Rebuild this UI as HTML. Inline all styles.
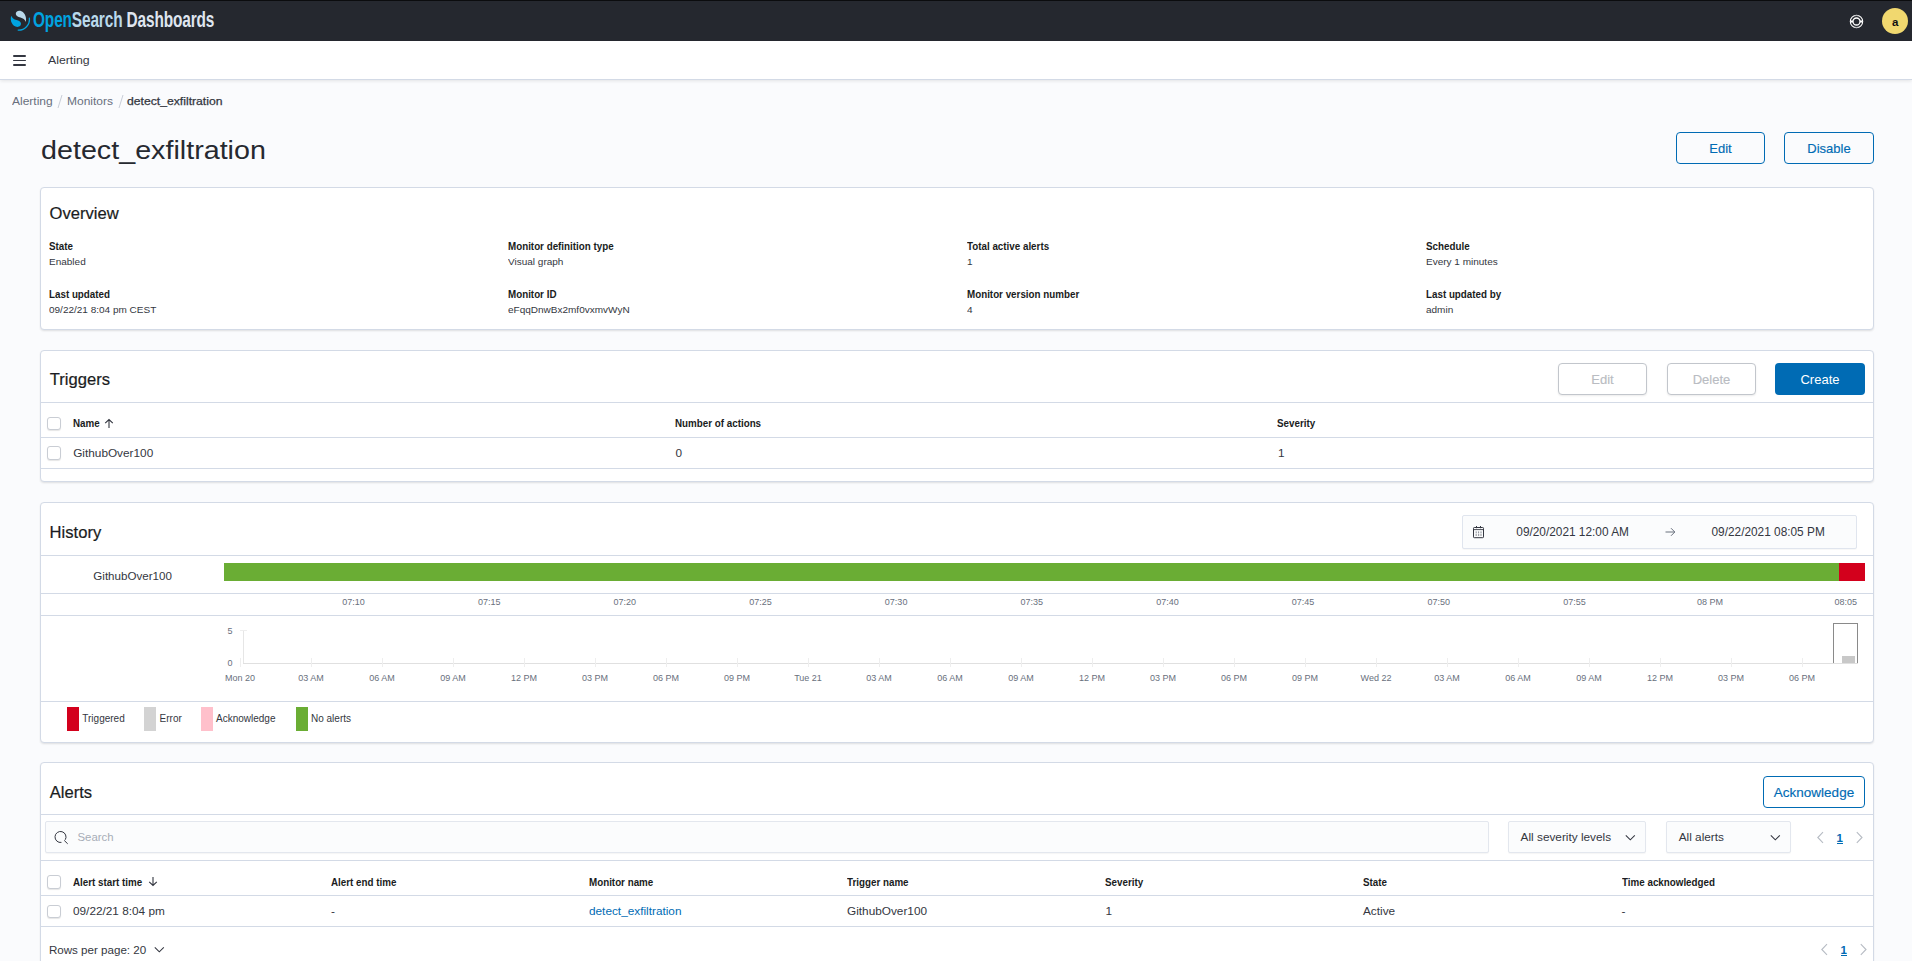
<!DOCTYPE html>
<html><head><meta charset="utf-8"><title>detect_exfiltration - Alerting</title>
<style>
html,body{margin:0;padding:0;}
body{width:1912px;height:961px;overflow:hidden;position:relative;background:#fafbfd;font-family:"Liberation Sans",sans-serif;}
.a{position:absolute;}
.t{position:absolute;white-space:nowrap;}
svg{overflow:visible;}
</style></head><body>
<div class="a" style="left:0px;top:0px;width:1912px;height:41px;background:#25282f;"></div>
<div class="a" style="left:0px;top:0px;width:1912px;height:1px;background:#0b0c0e;"></div>
<svg class="a" style="left:9px;top:10px" width="24" height="24" viewBox="0 0 24 24">
<path d="M16.7 11.9 C17.8 8.5 16.5 3.0 12.5 1.2 C9.5 -0.2 6.5 1.5 6.8 4.0 C7.0 6.0 9.0 6.8 11.5 7.5 C14.0 8.2 16.0 9.5 16.7 11.9 Z" fill="#b9d9eb"/>
<path d="M2.3 5.7 C1.0 9.0 2.0 14.5 6.5 16.5 C9.5 17.6 12.2 16.2 12.0 13.6 C11.8 11.5 9.8 10.6 7.5 10.0 C5.0 9.3 3.0 8.0 2.3 5.7 Z" fill="#00a3e0"/>
<path d="M20.4 8.2 A10.8 10.8 0 0 1 9.2 20.1" stroke="#00a3e0" stroke-width="1.3" fill="none" stroke-linecap="round"/>
</svg>
<div class="t" style="left:33px;top:8.1px;font-size:22.6px;line-height:24px;font-weight:700;transform:scaleX(0.682);transform-origin:0 0;white-space:nowrap;letter-spacing:-0.2px"><span style="color:#00a3e0">Open</span><span style="color:#b9d9eb">Search</span><span style="color:#dfe5ef"> Dashboards</span></div>
<svg class="a" style="left:1849px;top:14px" width="15" height="15" viewBox="0 0 15 15">
<circle cx="7.5" cy="7.5" r="6.2" stroke="#fff" stroke-width="1.1" fill="none"/>
<circle cx="7.5" cy="7.5" r="3.5" stroke="#fff" stroke-width="1.3" fill="none"/>
<path d="M1.8 7.5 H4 M11 7.5 H13.2" stroke="#fff" stroke-width="2.2"/>
<path d="M5.4 2.0 A5.8 5.8 0 0 1 9.6 2.0 M5.4 13.0 A5.8 5.8 0 0 0 9.6 13.0" stroke="#9a9ca0" stroke-width="0.8" fill="none"/>
</svg>
<div class="a" style="left:1882px;top:8px;width:26px;height:26px;background:#f1d86f;border-radius:50%;"></div>
<div class="t" style="left:1695.3px;width:400px;text-align:center;top:17.17px;font-size:11.5px;line-height:11.5px;color:#111;font-weight:700;">a</div>
<div class="a" style="left:0px;top:41px;width:1912px;height:38px;background:#fff;border-bottom:1px solid #d3dae6;box-shadow:0 1px 3px rgba(0,0,0,.06),0 2px 4px rgba(0,0,0,.03);"></div>
<div class="a" style="left:13px;top:55px;width:13px;height:1.6px;background:#343741;border-radius:1px;"></div>
<div class="a" style="left:13px;top:59.5px;width:13px;height:1.6px;background:#343741;border-radius:1px;"></div>
<div class="a" style="left:13px;top:64px;width:13px;height:1.6px;background:#343741;border-radius:1px;"></div>
<div class="t " style="left:48.3px;top:54.83px;font-size:11.07px;line-height:11.07px;color:#343741;font-weight:400;transform:scaleX(1.1111);transform-origin:0 0;">Alerting</div>
<div class="t " style="left:12.3px;top:95.86px;font-size:10.80px;line-height:10.80px;color:#69707d;font-weight:400;transform:scaleX(1.1111);transform-origin:0 0;">Alerting</div>
<svg class="a" style="left:56px;top:94px" width="8" height="15"><path d="M6 1 L2 14" stroke="#c9ced8" stroke-width="1"/></svg>
<div class="t " style="left:67px;top:95.86px;font-size:10.80px;line-height:10.80px;color:#69707d;font-weight:400;transform:scaleX(1.1111);transform-origin:0 0;">Monitors</div>
<svg class="a" style="left:117px;top:94px" width="8" height="15"><path d="M6 1 L2 14" stroke="#c9ced8" stroke-width="1"/></svg>
<div class="t " style="left:127.2px;top:95.71px;font-size:10.98px;line-height:10.98px;color:#343741;font-weight:400;-webkit-text-stroke:0.25px #343741;transform:scaleX(1.1111);transform-origin:0 0;">detect_exfiltration</div>
<div class="t " style="left:41.3px;top:136.68px;font-size:26.60px;line-height:26.60px;color:#262930;font-weight:400;transform:scaleX(1.079);transform-origin:0 0;">detect_exfiltration</div>
<div class="a" style="left:1676px;top:132px;width:89px;height:31.5px;box-sizing:border-box;border:1.5px solid #006bb4;border-radius:4px;background:transparent;"></div>
<div class="t" style="left:1520.5px;width:400px;text-align:center;top:141.70px;font-size:13px;line-height:13px;color:#006bb4;font-weight:400;-webkit-text-stroke:0.15px #006bb4;">Edit</div>
<div class="a" style="left:1784px;top:132px;width:90px;height:31.5px;box-sizing:border-box;border:1.5px solid #006bb4;border-radius:4px;background:transparent;"></div>
<div class="t" style="left:1629.0px;width:400px;text-align:center;top:141.70px;font-size:13px;line-height:13px;color:#006bb4;font-weight:400;-webkit-text-stroke:0.15px #006bb4;">Disable</div>
<div class="a" style="left:40px;top:187px;width:1834px;height:143px;box-sizing:border-box;background:#fff;border:1px solid #d3dae6;border-radius:4px;box-shadow:0 1px 2px rgba(0,0,0,.07),0 2px 3px -1px rgba(0,0,0,.05);"></div>
<div class="t " style="left:49.6px;top:205.95px;font-size:16.60px;line-height:16.60px;color:#1a1c21;font-weight:400;-webkit-text-stroke:0.2px #1a1c21;">Overview</div>
<div class="t " style="left:49px;top:242.04px;font-size:10.00px;line-height:10.00px;color:#1a1c21;font-weight:700;transform:scaleX(0.9804);transform-origin:0 0;">State</div>
<div class="t " style="left:49px;top:257.36px;font-size:9.50px;line-height:9.50px;color:#343741;font-weight:400;transform:scaleX(1.0526);transform-origin:0 0;">Enabled</div>
<div class="t " style="left:508px;top:242.04px;font-size:10.00px;line-height:10.00px;color:#1a1c21;font-weight:700;transform:scaleX(0.9804);transform-origin:0 0;">Monitor definition type</div>
<div class="t " style="left:508px;top:257.36px;font-size:9.50px;line-height:9.50px;color:#343741;font-weight:400;transform:scaleX(1.0526);transform-origin:0 0;">Visual graph</div>
<div class="t " style="left:967px;top:242.04px;font-size:10.00px;line-height:10.00px;color:#1a1c21;font-weight:700;transform:scaleX(0.9804);transform-origin:0 0;">Total active alerts</div>
<div class="t " style="left:967px;top:257.36px;font-size:9.50px;line-height:9.50px;color:#343741;font-weight:400;transform:scaleX(1.0526);transform-origin:0 0;">1</div>
<div class="t " style="left:1425.5px;top:242.04px;font-size:10.00px;line-height:10.00px;color:#1a1c21;font-weight:700;transform:scaleX(0.9804);transform-origin:0 0;">Schedule</div>
<div class="t " style="left:1425.5px;top:257.36px;font-size:9.50px;line-height:9.50px;color:#343741;font-weight:400;transform:scaleX(1.0526);transform-origin:0 0;">Every 1 minutes</div>
<div class="t " style="left:49px;top:289.84px;font-size:10.00px;line-height:10.00px;color:#1a1c21;font-weight:700;transform:scaleX(0.9804);transform-origin:0 0;">Last updated</div>
<div class="t " style="left:49px;top:305.16px;font-size:9.50px;line-height:9.50px;color:#343741;font-weight:400;transform:scaleX(1.0526);transform-origin:0 0;">09/22/21 8:04 pm CEST</div>
<div class="t " style="left:508px;top:289.84px;font-size:10.00px;line-height:10.00px;color:#1a1c21;font-weight:700;transform:scaleX(0.9804);transform-origin:0 0;">Monitor ID</div>
<div class="t " style="left:508px;top:305.16px;font-size:9.50px;line-height:9.50px;color:#343741;font-weight:400;transform:scaleX(1.0526);transform-origin:0 0;">eFqqDnwBx2mf0vxmvWyN</div>
<div class="t " style="left:967px;top:289.84px;font-size:10.00px;line-height:10.00px;color:#1a1c21;font-weight:700;transform:scaleX(0.9804);transform-origin:0 0;">Monitor version number</div>
<div class="t " style="left:967px;top:305.16px;font-size:9.50px;line-height:9.50px;color:#343741;font-weight:400;transform:scaleX(1.0526);transform-origin:0 0;">4</div>
<div class="t " style="left:1425.5px;top:289.84px;font-size:10.00px;line-height:10.00px;color:#1a1c21;font-weight:700;transform:scaleX(0.9804);transform-origin:0 0;">Last updated by</div>
<div class="t " style="left:1425.5px;top:305.16px;font-size:9.50px;line-height:9.50px;color:#343741;font-weight:400;transform:scaleX(1.0526);transform-origin:0 0;">admin</div>
<div class="a" style="left:40px;top:350px;width:1834px;height:132px;box-sizing:border-box;background:#fff;border:1px solid #d3dae6;border-radius:4px;box-shadow:0 1px 2px rgba(0,0,0,.07),0 2px 3px -1px rgba(0,0,0,.05);"></div>
<div class="t " style="left:49.8px;top:371.85px;font-size:16.60px;line-height:16.60px;color:#1a1c21;font-weight:400;-webkit-text-stroke:0.2px #1a1c21;">Triggers</div>
<div class="a" style="left:1558px;top:363px;width:89px;height:31.5px;box-sizing:border-box;border:1px solid #c2c6cc;border-radius:4px;background:#fff;box-shadow:0 1px 2px rgba(0,0,0,.08);"></div>
<div class="t" style="left:1402.5px;width:400px;text-align:center;top:372.60px;font-size:13px;line-height:13px;color:#b9bcc2;font-weight:400;-webkit-text-stroke:0.15px #b9bcc2;">Edit</div>
<div class="a" style="left:1667px;top:363px;width:89px;height:31.5px;box-sizing:border-box;border:1px solid #c2c6cc;border-radius:4px;background:#fff;box-shadow:0 1px 2px rgba(0,0,0,.08);"></div>
<div class="t" style="left:1511.5px;width:400px;text-align:center;top:372.60px;font-size:13px;line-height:13px;color:#b9bcc2;font-weight:400;-webkit-text-stroke:0.15px #b9bcc2;">Delete</div>
<div class="a" style="left:1775px;top:363px;width:90px;height:31.5px;border-radius:4px;background:#006bb4;"></div>
<div class="t" style="left:1620.0px;width:400px;text-align:center;top:372.60px;font-size:13px;line-height:13px;color:#fff;font-weight:400;">Create</div>
<div class="a" style="left:41px;top:402px;width:1832px;height:1px;background:#d3dae6;"></div>
<div class="a" style="left:47.2px;top:416.8px;width:13.5px;height:13.5px;box-sizing:border-box;border:1px solid #c9cdd4;border-radius:3px;background:#fff;box-shadow:0 1px 1px rgba(0,0,0,.1);"></div>
<div class="t " style="left:73.2px;top:419.14px;font-size:10.00px;line-height:10.00px;color:#1a1c21;font-weight:700;transform:scaleX(0.9804);transform-origin:0 0;">Name</div>
<svg class="a" style="left:104px;top:418px" width="10" height="11"><path d="M5 10 V1.5 M1.2 5.2 L5 1.5 L8.8 5.2" stroke="#343741" stroke-width="1.1" fill="none"/></svg>
<div class="t " style="left:675px;top:419.14px;font-size:10.00px;line-height:10.00px;color:#1a1c21;font-weight:700;transform:scaleX(0.9804);transform-origin:0 0;">Number of actions</div>
<div class="t " style="left:1277px;top:419.14px;font-size:10.00px;line-height:10.00px;color:#1a1c21;font-weight:700;transform:scaleX(0.9804);transform-origin:0 0;">Severity</div>
<div class="a" style="left:41px;top:437px;width:1832px;height:1px;background:#d3dae6;"></div>
<div class="a" style="left:47.2px;top:446px;width:13.5px;height:13.5px;box-sizing:border-box;border:1px solid #c9cdd4;border-radius:3px;background:#fff;box-shadow:0 1px 1px rgba(0,0,0,.1);"></div>
<div class="t " style="left:73.2px;top:448.41px;font-size:11.80px;line-height:11.80px;color:#343741;font-weight:400;">GithubOver100</div>
<div class="t " style="left:675.5px;top:448.41px;font-size:11.80px;line-height:11.80px;color:#343741;font-weight:400;">0</div>
<div class="t " style="left:1278px;top:448.41px;font-size:11.80px;line-height:11.80px;color:#343741;font-weight:400;">1</div>
<div class="a" style="left:41px;top:468px;width:1832px;height:1px;background:#d3dae6;"></div>
<div class="a" style="left:40px;top:502px;width:1834px;height:241px;box-sizing:border-box;background:#fff;border:1px solid #d3dae6;border-radius:4px;box-shadow:0 1px 2px rgba(0,0,0,.07),0 2px 3px -1px rgba(0,0,0,.05);"></div>
<div class="t " style="left:49.6px;top:525.45px;font-size:16.60px;line-height:16.60px;color:#1a1c21;font-weight:400;-webkit-text-stroke:0.2px #1a1c21;">History</div>
<div class="a" style="left:1462px;top:515px;width:395px;height:33.5px;box-sizing:border-box;background:#fbfcfd;border:1px solid #e0e5ee;border-radius:2px;box-shadow:0 1px 1px rgba(0,0,0,.03);"></div>
<svg class="a" style="left:1472px;top:526px" width="13" height="13" viewBox="0 0 13 13">
<rect x="1.5" y="1.5" width="10" height="10.2" rx="0.8" stroke="#343741" stroke-width="1" fill="none"/>
<path d="M1.5 3.6 H11.5" stroke="#343741" stroke-width="0.9"/>
<path d="M4.5 0 V2.2 M8.5 0 V2.2" stroke="#343741" stroke-width="1"/>
<path d="M4.2 5.4 V7.4 M6.6 5.4 V7.4 M9 5.4 V7.4" stroke="#8a8f98" stroke-width="1"/>
<path d="M3.6 9 H9.8" stroke="#343741" stroke-width="0.9" stroke-dasharray="1.2 1.2"/>
</svg>
<div class="t " style="left:1516.3px;top:526.77px;font-size:11.85px;line-height:11.85px;color:#343741;font-weight:400;">09/20/2021 12:00 AM</div>
<svg class="a" style="left:1665px;top:527px" width="11" height="10"><path d="M0.5 5 H9.8 M6 1.2 L9.8 5 L6 8.8" stroke="#69707d" stroke-width="1" fill="none"/></svg>
<div class="t " style="left:1711.5px;top:526.77px;font-size:11.85px;line-height:11.85px;color:#343741;font-weight:400;">09/22/2021 08:05 PM</div>
<div class="a" style="left:41px;top:555px;width:1832px;height:1px;background:#d3dae6;"></div>
<div class="t " style="left:93.3px;top:569.88px;font-size:11.60px;line-height:11.60px;color:#343741;font-weight:400;">GithubOver100</div>
<div class="a" style="left:224px;top:563px;width:1615px;height:18px;background:#6aad34;"></div>
<div class="a" style="left:1839px;top:563px;width:26px;height:18px;background:#d3001c;"></div>
<div class="a" style="left:41px;top:593px;width:1832px;height:1px;background:#d3dae6;"></div>
<div class="t" style="left:153.5px;width:400px;text-align:center;top:598.18px;font-size:9px;line-height:9px;color:#69707d;font-weight:400;">07:10</div>
<div class="t" style="left:289.15999999999997px;width:400px;text-align:center;top:598.18px;font-size:9px;line-height:9px;color:#69707d;font-weight:400;">07:15</div>
<div class="t" style="left:424.81999999999994px;width:400px;text-align:center;top:598.18px;font-size:9px;line-height:9px;color:#69707d;font-weight:400;">07:20</div>
<div class="t" style="left:560.48px;width:400px;text-align:center;top:598.18px;font-size:9px;line-height:9px;color:#69707d;font-weight:400;">07:25</div>
<div class="t" style="left:696.14px;width:400px;text-align:center;top:598.18px;font-size:9px;line-height:9px;color:#69707d;font-weight:400;">07:30</div>
<div class="t" style="left:831.8px;width:400px;text-align:center;top:598.18px;font-size:9px;line-height:9px;color:#69707d;font-weight:400;">07:35</div>
<div class="t" style="left:967.46px;width:400px;text-align:center;top:598.18px;font-size:9px;line-height:9px;color:#69707d;font-weight:400;">07:40</div>
<div class="t" style="left:1103.12px;width:400px;text-align:center;top:598.18px;font-size:9px;line-height:9px;color:#69707d;font-weight:400;">07:45</div>
<div class="t" style="left:1238.78px;width:400px;text-align:center;top:598.18px;font-size:9px;line-height:9px;color:#69707d;font-weight:400;">07:50</div>
<div class="t" style="left:1374.44px;width:400px;text-align:center;top:598.18px;font-size:9px;line-height:9px;color:#69707d;font-weight:400;">07:55</div>
<div class="t" style="left:1510.1px;width:400px;text-align:center;top:598.18px;font-size:9px;line-height:9px;color:#69707d;font-weight:400;">08 PM</div>
<div class="t" style="left:1645.76px;width:400px;text-align:center;top:598.18px;font-size:9px;line-height:9px;color:#69707d;font-weight:400;">08:05</div>
<div class="a" style="left:41px;top:615px;width:1832px;height:1px;background:#d3dae6;"></div>
<div class="t " style="left:227.6px;top:626.78px;font-size:9.00px;line-height:9.00px;color:#69707d;font-weight:400;">5</div>
<div class="t " style="left:227.6px;top:658.78px;font-size:9.00px;line-height:9.00px;color:#69707d;font-weight:400;">0</div>
<div class="a" style="left:243px;top:630px;width:1px;height:33.5px;background:#e6e6e6;"></div>
<div class="a" style="left:239.5px;top:630px;width:7px;height:1px;background:#eeeeee;"></div>
<div class="a" style="left:243px;top:663px;width:1615px;height:1px;background:#e0e0e0;"></div>
<div class="a" style="left:240.0px;top:658px;width:1px;height:9px;background:#eeeeee;"></div>
<div class="t" style="left:40.0px;width:400px;text-align:center;top:673.98px;font-size:9px;line-height:9px;color:#69707d;font-weight:400;">Mon 20</div>
<div class="a" style="left:311.0px;top:658px;width:1px;height:9px;background:#eeeeee;"></div>
<div class="t" style="left:111.0px;width:400px;text-align:center;top:673.98px;font-size:9px;line-height:9px;color:#69707d;font-weight:400;">03 AM</div>
<div class="a" style="left:382.0px;top:658px;width:1px;height:9px;background:#eeeeee;"></div>
<div class="t" style="left:182.0px;width:400px;text-align:center;top:673.98px;font-size:9px;line-height:9px;color:#69707d;font-weight:400;">06 AM</div>
<div class="a" style="left:453.0px;top:658px;width:1px;height:9px;background:#eeeeee;"></div>
<div class="t" style="left:253.0px;width:400px;text-align:center;top:673.98px;font-size:9px;line-height:9px;color:#69707d;font-weight:400;">09 AM</div>
<div class="a" style="left:524.0px;top:658px;width:1px;height:9px;background:#eeeeee;"></div>
<div class="t" style="left:324.0px;width:400px;text-align:center;top:673.98px;font-size:9px;line-height:9px;color:#69707d;font-weight:400;">12 PM</div>
<div class="a" style="left:595.0px;top:658px;width:1px;height:9px;background:#eeeeee;"></div>
<div class="t" style="left:395.0px;width:400px;text-align:center;top:673.98px;font-size:9px;line-height:9px;color:#69707d;font-weight:400;">03 PM</div>
<div class="a" style="left:666.0px;top:658px;width:1px;height:9px;background:#eeeeee;"></div>
<div class="t" style="left:466.0px;width:400px;text-align:center;top:673.98px;font-size:9px;line-height:9px;color:#69707d;font-weight:400;">06 PM</div>
<div class="a" style="left:737.0px;top:658px;width:1px;height:9px;background:#eeeeee;"></div>
<div class="t" style="left:537.0px;width:400px;text-align:center;top:673.98px;font-size:9px;line-height:9px;color:#69707d;font-weight:400;">09 PM</div>
<div class="a" style="left:808.0px;top:658px;width:1px;height:9px;background:#eeeeee;"></div>
<div class="t" style="left:608.0px;width:400px;text-align:center;top:673.98px;font-size:9px;line-height:9px;color:#69707d;font-weight:400;">Tue 21</div>
<div class="a" style="left:879.0px;top:658px;width:1px;height:9px;background:#eeeeee;"></div>
<div class="t" style="left:679.0px;width:400px;text-align:center;top:673.98px;font-size:9px;line-height:9px;color:#69707d;font-weight:400;">03 AM</div>
<div class="a" style="left:950.0px;top:658px;width:1px;height:9px;background:#eeeeee;"></div>
<div class="t" style="left:750.0px;width:400px;text-align:center;top:673.98px;font-size:9px;line-height:9px;color:#69707d;font-weight:400;">06 AM</div>
<div class="a" style="left:1021.0px;top:658px;width:1px;height:9px;background:#eeeeee;"></div>
<div class="t" style="left:821.0px;width:400px;text-align:center;top:673.98px;font-size:9px;line-height:9px;color:#69707d;font-weight:400;">09 AM</div>
<div class="a" style="left:1092.0px;top:658px;width:1px;height:9px;background:#eeeeee;"></div>
<div class="t" style="left:892.0px;width:400px;text-align:center;top:673.98px;font-size:9px;line-height:9px;color:#69707d;font-weight:400;">12 PM</div>
<div class="a" style="left:1163.0px;top:658px;width:1px;height:9px;background:#eeeeee;"></div>
<div class="t" style="left:963.0px;width:400px;text-align:center;top:673.98px;font-size:9px;line-height:9px;color:#69707d;font-weight:400;">03 PM</div>
<div class="a" style="left:1234.0px;top:658px;width:1px;height:9px;background:#eeeeee;"></div>
<div class="t" style="left:1034.0px;width:400px;text-align:center;top:673.98px;font-size:9px;line-height:9px;color:#69707d;font-weight:400;">06 PM</div>
<div class="a" style="left:1305.0px;top:658px;width:1px;height:9px;background:#eeeeee;"></div>
<div class="t" style="left:1105.0px;width:400px;text-align:center;top:673.98px;font-size:9px;line-height:9px;color:#69707d;font-weight:400;">09 PM</div>
<div class="a" style="left:1376.0px;top:658px;width:1px;height:9px;background:#eeeeee;"></div>
<div class="t" style="left:1176.0px;width:400px;text-align:center;top:673.98px;font-size:9px;line-height:9px;color:#69707d;font-weight:400;">Wed 22</div>
<div class="a" style="left:1447.0px;top:658px;width:1px;height:9px;background:#eeeeee;"></div>
<div class="t" style="left:1247.0px;width:400px;text-align:center;top:673.98px;font-size:9px;line-height:9px;color:#69707d;font-weight:400;">03 AM</div>
<div class="a" style="left:1518.0px;top:658px;width:1px;height:9px;background:#eeeeee;"></div>
<div class="t" style="left:1318.0px;width:400px;text-align:center;top:673.98px;font-size:9px;line-height:9px;color:#69707d;font-weight:400;">06 AM</div>
<div class="a" style="left:1589.0px;top:658px;width:1px;height:9px;background:#eeeeee;"></div>
<div class="t" style="left:1389.0px;width:400px;text-align:center;top:673.98px;font-size:9px;line-height:9px;color:#69707d;font-weight:400;">09 AM</div>
<div class="a" style="left:1660.0px;top:658px;width:1px;height:9px;background:#eeeeee;"></div>
<div class="t" style="left:1460.0px;width:400px;text-align:center;top:673.98px;font-size:9px;line-height:9px;color:#69707d;font-weight:400;">12 PM</div>
<div class="a" style="left:1731.0px;top:658px;width:1px;height:9px;background:#eeeeee;"></div>
<div class="t" style="left:1531.0px;width:400px;text-align:center;top:673.98px;font-size:9px;line-height:9px;color:#69707d;font-weight:400;">03 PM</div>
<div class="a" style="left:1802.0px;top:658px;width:1px;height:9px;background:#eeeeee;"></div>
<div class="t" style="left:1602.0px;width:400px;text-align:center;top:673.98px;font-size:9px;line-height:9px;color:#69707d;font-weight:400;">06 PM</div>
<div class="a" style="left:1833px;top:623px;width:25px;height:40px;box-sizing:border-box;border:1px solid #8a8a8a;border-bottom:none;"></div>
<div class="a" style="left:1842px;top:655.5px;width:13px;height:7px;background:#c8c8c8;"></div>
<div class="a" style="left:41px;top:701px;width:1832px;height:1px;background:#d3dae6;"></div>
<div class="a" style="left:66.8px;top:707px;width:12px;height:24px;background:#d3001c;"></div>
<div class="t " style="left:82.3px;top:714.33px;font-size:10.00px;line-height:10.00px;color:#343741;font-weight:400;">Triggered</div>
<div class="a" style="left:144px;top:707px;width:12px;height:24px;background:#d3d3d3;"></div>
<div class="t " style="left:159.6px;top:714.33px;font-size:10.00px;line-height:10.00px;color:#343741;font-weight:400;">Error</div>
<div class="a" style="left:201px;top:707px;width:12px;height:24px;background:#ffc0cb;"></div>
<div class="t " style="left:216px;top:714.33px;font-size:10.00px;line-height:10.00px;color:#343741;font-weight:400;">Acknowledge</div>
<div class="a" style="left:296px;top:707px;width:12px;height:24px;background:#6aad34;"></div>
<div class="t " style="left:311px;top:714.33px;font-size:10.00px;line-height:10.00px;color:#343741;font-weight:400;">No alerts</div>
<div class="a" style="left:40px;top:762px;width:1834px;height:300px;box-sizing:border-box;background:#fff;border:1px solid #d3dae6;border-radius:4px;box-shadow:0 1px 2px rgba(0,0,0,.07),0 2px 3px -1px rgba(0,0,0,.05);"></div>
<div class="t " style="left:49.7px;top:785.05px;font-size:16.60px;line-height:16.60px;color:#1a1c21;font-weight:400;-webkit-text-stroke:0.2px #1a1c21;">Alerts</div>
<div class="a" style="left:1763px;top:776px;width:102px;height:31.5px;box-sizing:border-box;border:1.5px solid #006bb4;border-radius:4px;background:transparent;"></div>
<div class="t" style="left:1614.0px;width:400px;text-align:center;top:785.97px;font-size:13.5px;line-height:13.5px;color:#006bb4;font-weight:400;-webkit-text-stroke:0.15px #006bb4;">Acknowledge</div>
<div class="a" style="left:41px;top:814px;width:1832px;height:1px;background:#d3dae6;"></div>
<div class="a" style="left:45px;top:821px;width:1444px;height:31.5px;box-sizing:border-box;background:#fbfcfd;border:1px solid #e3e7ee;border-radius:2px;box-shadow:0 1px 1px rgba(0,0,0,.04);"></div>
<svg class="a" style="left:54px;top:831px" width="15" height="14"><path d="M7.45 11.4 A5.5 5.5 0 1 1 11.26 8.75" stroke="#343741" stroke-width="1" fill="none"/><path d="M10.2 9.4 L13.7 12.8" stroke="#343741" stroke-width="1"/></svg>
<div class="t " style="left:77.5px;top:831.85px;font-size:11.40px;line-height:11.40px;color:#a7adb7;font-weight:400;">Search</div>
<div class="a" style="left:1508.4px;top:821px;width:137.2px;height:31.5px;box-sizing:border-box;background:#fbfcfd;border:1px solid #e3e7ee;border-radius:2px;box-shadow:0 1px 1px rgba(0,0,0,.04);"></div>
<div class="t " style="left:1520.6px;top:832.31px;font-size:11.80px;line-height:11.80px;color:#343741;font-weight:400;">All severity levels</div>
<svg class="a" style="left:1625px;top:834px" width="11" height="8"><path d="M0.8 1.3 L5.3 5.8 L9.8 1.3" stroke="#343741" stroke-width="1.1" fill="none"/></svg>
<div class="a" style="left:1666.4px;top:821px;width:124.2px;height:31.5px;box-sizing:border-box;background:#fbfcfd;border:1px solid #e3e7ee;border-radius:2px;box-shadow:0 1px 1px rgba(0,0,0,.04);"></div>
<div class="t " style="left:1678.7px;top:832.31px;font-size:11.80px;line-height:11.80px;color:#343741;font-weight:400;">All alerts</div>
<svg class="a" style="left:1770px;top:834px" width="11" height="8"><path d="M0.8 1.3 L5.3 5.8 L9.8 1.3" stroke="#343741" stroke-width="1.1" fill="none"/></svg>
<svg class="a" style="left:1816px;top:831px" width="9" height="13"><path d="M7 1.2 L1.8 6.5 L7 11.8" stroke="#b7bcc4" stroke-width="1.1" fill="none"/></svg>
<div class="t " style="left:1836.5px;top:832.57px;font-size:11.50px;line-height:11.50px;color:#006bb4;font-weight:700;">1</div>
<div class="a" style="left:1836.5px;top:843.3px;width:6.5px;height:1px;background:#006bb4;"></div>
<svg class="a" style="left:1855px;top:831px" width="9" height="13"><path d="M1.8 1.2 L7 6.5 L1.8 11.8" stroke="#b7bcc4" stroke-width="1.1" fill="none"/></svg>
<div class="a" style="left:41px;top:860px;width:1832px;height:1px;background:#d3dae6;"></div>
<div class="a" style="left:47.2px;top:875px;width:13.5px;height:13.5px;box-sizing:border-box;border:1px solid #c9cdd4;border-radius:3px;background:#fff;box-shadow:0 1px 1px rgba(0,0,0,.1);"></div>
<div class="t " style="left:73.3px;top:877.54px;font-size:10.00px;line-height:10.00px;color:#1a1c21;font-weight:700;transform:scaleX(0.9804);transform-origin:0 0;">Alert start time</div>
<div class="t " style="left:331px;top:877.54px;font-size:10.00px;line-height:10.00px;color:#1a1c21;font-weight:700;transform:scaleX(0.9804);transform-origin:0 0;">Alert end time</div>
<div class="t " style="left:589px;top:877.54px;font-size:10.00px;line-height:10.00px;color:#1a1c21;font-weight:700;transform:scaleX(0.9804);transform-origin:0 0;">Monitor name</div>
<div class="t " style="left:847px;top:877.54px;font-size:10.00px;line-height:10.00px;color:#1a1c21;font-weight:700;transform:scaleX(0.9804);transform-origin:0 0;">Trigger name</div>
<div class="t " style="left:1105px;top:877.54px;font-size:10.00px;line-height:10.00px;color:#1a1c21;font-weight:700;transform:scaleX(0.9804);transform-origin:0 0;">Severity</div>
<div class="t " style="left:1363px;top:877.54px;font-size:10.00px;line-height:10.00px;color:#1a1c21;font-weight:700;transform:scaleX(0.9804);transform-origin:0 0;">State</div>
<div class="t " style="left:1621.6px;top:877.54px;font-size:10.00px;line-height:10.00px;color:#1a1c21;font-weight:700;transform:scaleX(0.9804);transform-origin:0 0;">Time acknowledged</div>
<svg class="a" style="left:148px;top:875.5px" width="10" height="11"><path d="M5 1 V9.5 M1.2 5.8 L5 9.5 L8.8 5.8" stroke="#343741" stroke-width="1.1" fill="none"/></svg>
<div class="a" style="left:41px;top:895px;width:1832px;height:1px;background:#d3dae6;"></div>
<div class="a" style="left:47.2px;top:904.5px;width:13.5px;height:13.5px;box-sizing:border-box;border:1px solid #c9cdd4;border-radius:3px;background:#fff;box-shadow:0 1px 1px rgba(0,0,0,.1);"></div>
<div class="t " style="left:73px;top:906.01px;font-size:11.80px;line-height:11.80px;color:#343741;font-weight:400;">09/22/21 8:04 pm</div>
<div class="t " style="left:331px;top:906.01px;font-size:11.80px;line-height:11.80px;color:#343741;font-weight:400;">-</div>
<div class="t " style="left:589px;top:906.01px;font-size:11.80px;line-height:11.80px;color:#006bb4;font-weight:400;">detect_exfiltration</div>
<div class="t " style="left:847px;top:906.01px;font-size:11.80px;line-height:11.80px;color:#343741;font-weight:400;">GithubOver100</div>
<div class="t " style="left:1105.5px;top:906.01px;font-size:11.80px;line-height:11.80px;color:#343741;font-weight:400;">1</div>
<div class="t " style="left:1363px;top:906.01px;font-size:11.80px;line-height:11.80px;color:#343741;font-weight:400;">Active</div>
<div class="t " style="left:1621.6px;top:906.01px;font-size:11.80px;line-height:11.80px;color:#343741;font-weight:400;">-</div>
<div class="a" style="left:41px;top:926px;width:1832px;height:1px;background:#d3dae6;"></div>
<div class="t " style="left:48.9px;top:944.28px;font-size:11.60px;line-height:11.60px;color:#343741;font-weight:400;">Rows per page: 20</div>
<svg class="a" style="left:154px;top:946px" width="11" height="8"><path d="M0.8 1.3 L5.3 5.8 L9.8 1.3" stroke="#343741" stroke-width="1.1" fill="none"/></svg>
<svg class="a" style="left:1820px;top:943px" width="9" height="13"><path d="M7 1.2 L1.8 6.5 L7 11.8" stroke="#b7bcc4" stroke-width="1.1" fill="none"/></svg>
<div class="t " style="left:1840.6px;top:944.57px;font-size:11.50px;line-height:11.50px;color:#006bb4;font-weight:700;">1</div>
<div class="a" style="left:1840.6px;top:955.3px;width:6.5px;height:1px;background:#006bb4;"></div>
<svg class="a" style="left:1859px;top:943px" width="9" height="13"><path d="M1.8 1.2 L7 6.5 L1.8 11.8" stroke="#b7bcc4" stroke-width="1.1" fill="none"/></svg>
</body></html>
